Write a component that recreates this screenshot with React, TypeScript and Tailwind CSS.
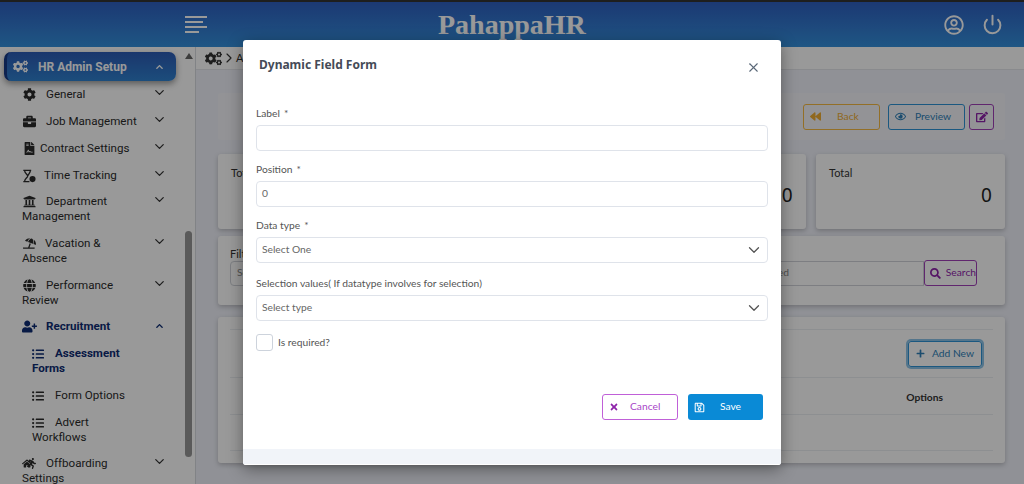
import {
  FaBriefcase,
  FaChevronUp,
  FaCog,
  FaCogs,
  FaEdit,
  FaFileContract,
  FaGlobe,
  FaListUl,
  FaRegSave,
  FaSearch,
  FaTimes,
  FaUniversity,
  FaUserPlus,
  FaBackward,
  FaRegEye,
  FaRegUserCircle,
  FaPlus,
  FaRunning,
  FaUmbrellaBeach,
  FaHome,
} from "react-icons/fa";
import { ChevronDown, ChevronRight, X, Power } from "lucide-react";
import type { ReactNode } from "react";

function HourglassIcon() {
  return (
    <svg viewBox="0 0 16 16" className="h-[14px] w-[14px]" fill="none">
      <path d="M1.5 1.5h9M1.5 14.5h7M3 2c0 3 3.5 4 3.5 6S3 11 3 14M9.5 2c0 2-1.5 3-3 6" stroke="#2a2a2a" strokeWidth="1.5" />
      <circle cx="12" cy="11.5" r="3.5" fill="#2a2a2a" />
    </svg>
  );
}

function OffboardIcon() {
  return (
    <span className="relative block h-[13px] w-[15px]">
      <FaHome className="absolute left-0 top-[1px] h-[11px] w-[10px] text-[#2a2a2a]" />
      <FaRunning className="absolute right-0 top-0 h-[13px] w-[9px] text-[#2a2a2a]" />
    </span>
  );
}

function NavItem({
  icon,
  first,
  rest,
  gap = "ml-[10px]",
  top = "mt-[12px]",
}: {
  icon: ReactNode;
  first: string;
  rest?: string;
  gap?: string;
  top?: string;
}) {
  return (
    <div className={`relative pl-[22px] pr-[26px] text-[11.6px] leading-[15px] text-[#2b2b2b] ${top}`}>
      <div className="flex items-center">
        <span className="flex w-[14px] justify-center">{icon}</span>
        <span className={gap}>{first}</span>
      </div>
      {rest && <div>{rest}</div>}
      <ChevronDown className="absolute right-[17px] top-[-2px] h-[15px] w-[15px] text-[#333]" strokeWidth={2} />
    </div>
  );
}

function SubItem({ first, rest, active }: { first: string; rest?: string; active?: boolean }) {
  return (
    <div
      className={`mt-[12px] pl-[32px] text-[11.6px] leading-[15px] ${active ? "font-bold text-[#0e2c73]" : "text-[#2b2b2b]"}`}
    >
      <div className="flex items-center">
        <FaListUl className="h-[12px] w-[12px]" />
        <span className="ml-[11px]">{first}</span>
      </div>
      {rest && <div>{rest}</div>}
    </div>
  );
}

function Sidebar() {
  const iconClass = "h-[13px] w-[13px] text-[#2a2a2a]";
  return (
    <aside className="relative flex h-full w-[196px] shrink-0 border-r border-[#d8dae0] bg-white font-['Roboto',sans-serif]">
      <div className="flex-1 overflow-hidden pt-[5px]">
        <div className="relative ml-[4px] flex h-[29px] w-[172px] items-center rounded-[7px] border-l-[3px] border-[#173a86] bg-gradient-to-b from-[#2c5bb5] to-[#2f81cf] pl-[6px] text-[12px] font-bold text-white shadow-[0_3px_6px_rgba(0,0,0,0.4)]">
          <FaCogs className="h-[15px] w-[15px]" />
          <span className="ml-[10px]">HR Admin Setup</span>
          <FaChevronUp className="absolute right-[12px] top-[11px] h-[8px] w-[9px]" />
        </div>
        <NavItem top="mt-[6px]" icon={<FaCog className={iconClass} />} first="General" />
        <NavItem icon={<FaBriefcase className={iconClass} />} first="Job Management" />
        <NavItem gap="ml-[4px]" icon={<FaFileContract className={iconClass} />} first="Contract Settings" />
        <NavItem gap="ml-[8px]" icon={<HourglassIcon />} first="Time Tracking" />
        <NavItem top="mt-[11px]" icon={<FaUniversity className={iconClass} />} first="Department" rest="Management" />
        <NavItem gap="ml-[9px]" icon={<FaUmbrellaBeach className={iconClass} />} first="Vacation &" rest="Absence" />
        <NavItem icon={<FaGlobe className={iconClass} />} first="Performance" rest="Review" />
        <div className="relative mt-[11px] flex items-center pl-[22px] text-[11.6px] font-bold leading-[15px] text-[#0e2c73]">
          <FaUserPlus className="h-[13px] w-[15px]" />
          <span className="ml-[9px]">Recruitment</span>
          <FaChevronUp className="absolute right-[20px] top-[3px] h-[8px] w-[9px]" />
        </div>
        <SubItem active first="Assessment" rest="Forms" />
        <SubItem first="Form Options" />
        <SubItem first="Advert" rest="Workflows" />
        <NavItem top="mt-[11px]" icon={<OffboardIcon />} first="Offboarding" rest="Settings" />
      </div>
      <div className="relative mr-[1px] w-[10px] shrink-0">
        <div className="mx-auto mt-[6px] h-0 w-0 border-x-[4px] border-b-[6px] border-x-transparent border-b-[#666]" />
        <div className="absolute left-[1px] top-[184px] h-[226px] w-[7px] rounded-full bg-[#969696]" />
      </div>
    </aside>
  );
}

function StatCard({ label }: { label: string }) {
  return (
    <div className="h-[75px] w-[189px] rounded-[3px] bg-white px-[13px] pt-[12px] shadow-[0_2px_5px_rgba(0,0,0,0.22)]">
      <div className="text-[11px] leading-[14px] text-[#333]">{label}</div>
      <div className="mt-[2px] text-right font-['Noto_Sans',sans-serif] text-[19px] leading-[26px] text-[#222]">0</div>
    </div>
  );
}

function Main() {
  return (
    <main className="flex min-w-0 flex-1 flex-col bg-[#f0f2fa] font-['Lato',sans-serif]">
      <div className="flex h-[23px] shrink-0 items-center border-b border-[#e4e6ec] bg-white pl-[9px] text-[#333]">
        <FaCogs className="h-[17px] w-[17px]" />
        <ChevronRight className="-mx-px h-[16px] w-[16px]" strokeWidth={1.75} />
        <span className="text-[11px]">Assessment Forms</span>
      </div>
      <div className="ml-[22px] mr-[19px] mt-[23px] flex h-[47px] items-center justify-end gap-[4px] rounded-[3px] bg-[#f5f6fb] pr-[11px]">
        <div className="mr-[4px] flex h-[26px] w-[77px] items-center rounded-[3px] border border-[#f5b942] pl-[6px] text-[10.25px] text-[#f0ad33]">
          <FaBackward className="h-[11px] w-[11px]" />
          <span className="ml-[16px]">Back</span>
        </div>
        <div className="flex h-[26px] w-[77px] items-center rounded-[3px] border border-[#2e93d6] pl-[6px] text-[10.25px] text-[#2e7fb8]">
          <FaRegEye className="h-[11px] w-[11px]" />
          <span className="ml-[9px]">Preview</span>
        </div>
        <div className="flex h-[26px] w-[25px] items-center justify-center rounded-[3px] border border-[#a040b8] text-[#8e24aa]">
          <FaEdit className="h-[12px] w-[12px]" />
        </div>
      </div>
      <div className="ml-[22px] mr-[19px] mt-[14px] flex justify-between">
        <StatCard label="Total" />
        <StatCard label="Total" />
        <StatCard label="Total" />
        <StatCard label="Total" />
      </div>
      <div className="ml-[22px] mr-[19px] mt-[7px] h-[69px] rounded-[3px] bg-white px-[12px] pt-[11px] shadow-[0_2px_5px_rgba(0,0,0,0.22)]">
        <div className="text-[11px] leading-[13px] text-[#333]">Filter</div>
        <div className="flex items-center pr-[16px]">
          <div className="flex h-[25px] w-[300px] items-center rounded-[4px] border border-[#d0d3d9] pl-[6px] text-[10.25px] text-[#888]">
            Select
          </div>
          <div className="flex h-[25px] flex-1 items-center justify-end border border-[#d0d3d9] pr-[134px] text-[10.25px] text-[#888]">
            Not Selected
          </div>
          <div className="flex h-[26px] w-[53px] shrink-0 items-center rounded-[3px] border border-[#a040b8] pl-[5px] text-[10.25px] text-[#8e24aa]">
            <FaSearch className="h-[11px] w-[11px]" />
            <span className="ml-[5px]">Search</span>
          </div>
        </div>
      </div>
      <div className="ml-[22px] mr-[19px] mt-[12px] h-[146px] rounded-[3px] bg-white px-[12px] pt-[12px] shadow-[0_2px_5px_rgba(0,0,0,0.22)]">
        <div className="flex h-[49px] items-center justify-end border-y border-[#eceef2] pr-[11px]">
          <div className="flex h-[26px] w-[74px] items-center justify-center rounded-[3px] border border-[#2e93d6] text-[10.25px] text-[#2e7fb8] shadow-[0_0_0_2px_rgba(46,147,214,0.55)]">
            <FaPlus className="h-[9px] w-[9px]" />
            <span className="ml-[7px]">Add New</span>
          </div>
        </div>
        <div className="flex h-[37px] items-center justify-end border-b border-[#eceef2] pr-[50px] pt-[3px] text-[10.25px] font-bold text-[#333]">
          Options
        </div>
        <div className="h-[36px] border-b border-[#eceef2]" />
      </div>
    </main>
  );
}

function Field({ label, required, children }: { label: string; required?: boolean; children: ReactNode }) {
  return (
    <div>
      <div className="text-[10.25px] leading-[14px] text-[#555]">
        {label}
        {required && <span className="ml-[4px]">*</span>}
      </div>
      {children}
    </div>
  );
}

function TextBox({ value }: { value?: string }) {
  return (
    <div className="mt-[5px] flex h-[26px] items-center rounded-[4px] border border-[#dfe3ea] bg-white px-[5px] text-[10.25px] text-[#666]">
      {value}
    </div>
  );
}

function SelectBox({ value }: { value: string }) {
  return (
    <div className="mt-[5px] flex h-[26px] items-center justify-between rounded-[4px] border border-[#dfe3ea] bg-white pl-[5px] pr-[4px] text-[10.25px] text-[#666]">
      {value}
      <ChevronDown className="h-[18px] w-[18px] text-[#555]" strokeWidth={1.75} />
    </div>
  );
}

function Modal() {
  return (
    <div className="absolute left-[243px] top-[40px] flex h-[425px] w-[538px] flex-col overflow-hidden rounded-[3px] bg-white font-['Lato',sans-serif] shadow-[0_4px_16px_rgba(0,0,0,0.4)]">
      <div className="flex-1 px-[13px]">
        <div className="flex items-start justify-between pl-[3px] pt-[16px]">
          <h2 className="font-['Noto_Sans',sans-serif] text-[12px] font-bold leading-[17px] text-[#454b57]">
            Dynamic Field Form
          </h2>
          <X className="mr-[7px] mt-[4px] h-[15px] w-[15px] text-[#5a6878]" strokeWidth={1.75} />
        </div>
        <div className="mt-[31px]">
          <Field label="Label" required>
            <TextBox />
          </Field>
        </div>
        <div className="mt-[11px]">
          <Field label="Position" required>
            <TextBox value="0" />
          </Field>
        </div>
        <div className="mt-[11px]">
          <Field label="Data type" required>
            <SelectBox value="Select One" />
          </Field>
        </div>
        <div className="mt-[13px]">
          <Field label="Selection values( If datatype involves for selection)">
            <SelectBox value="Select type" />
          </Field>
        </div>
        <div className="mt-[13px] flex items-center">
          <div className="h-[17px] w-[17px] rounded-[3px] border border-[#cdd3dc]" />
          <span className="ml-[5px] text-[10.25px] text-[#555]">Is required?</span>
        </div>
        <div className="mr-[5px] mt-[43px] flex justify-end gap-[10px] text-[10.25px]">
          <div className="flex h-[26px] w-[76px] items-center rounded-[3px] border border-[#c060d8] pl-[6px] text-[#a845c8]">
            <FaTimes className="h-[10px] w-[10px] text-[#8e24aa]" />
            <span className="ml-[11px]">Cancel</span>
          </div>
          <div className="flex h-[26px] w-[75px] items-center rounded-[3px] bg-[#0a8ad6] pl-[6px] text-white">
            <FaRegSave className="h-[11px] w-[11px]" />
            <span className="ml-[15px]">Save</span>
          </div>
        </div>
      </div>
      <div className="h-[15px] shrink-0 bg-[#f1f4f9]" />
      <div className="h-px shrink-0 bg-white" />
    </div>
  );
}

export default function App() {
  return (
    <div className="relative flex h-[484px] w-[1024px] flex-col overflow-hidden bg-white">
      <header className="flex h-[47px] shrink-0 items-center border-t-[2px] border-[#333] bg-gradient-to-b from-[#2f5fc0] to-[#3490dc]">
        <div className="ml-[185px] flex w-[22px] flex-col gap-[3px]">
          <div className="h-[2px] w-[22px] bg-white" />
          <div className="h-[2px] w-[18px] bg-white" />
          <div className="h-[2px] w-[22px] bg-white" />
          <div className="h-[2px] w-[14px] bg-white" />
        </div>
        <div className="ml-[231px] font-['Liberation_Serif',serif] text-[28px] font-bold leading-none text-white">
          PahappaHR
        </div>
        <FaRegUserCircle className="ml-auto h-[20px] w-[20px] text-white" />
        <Power className="ml-[18px] mr-[21px] h-[21px] w-[21px] text-white" strokeWidth={2.25} />
      </header>
      <div className="flex min-h-0 flex-1">
        <Sidebar />
        <Main />
      </div>
      {/* backdrop */}
      <div className="absolute inset-0 bg-black/40" />
      <Modal />
    </div>
  );
}
